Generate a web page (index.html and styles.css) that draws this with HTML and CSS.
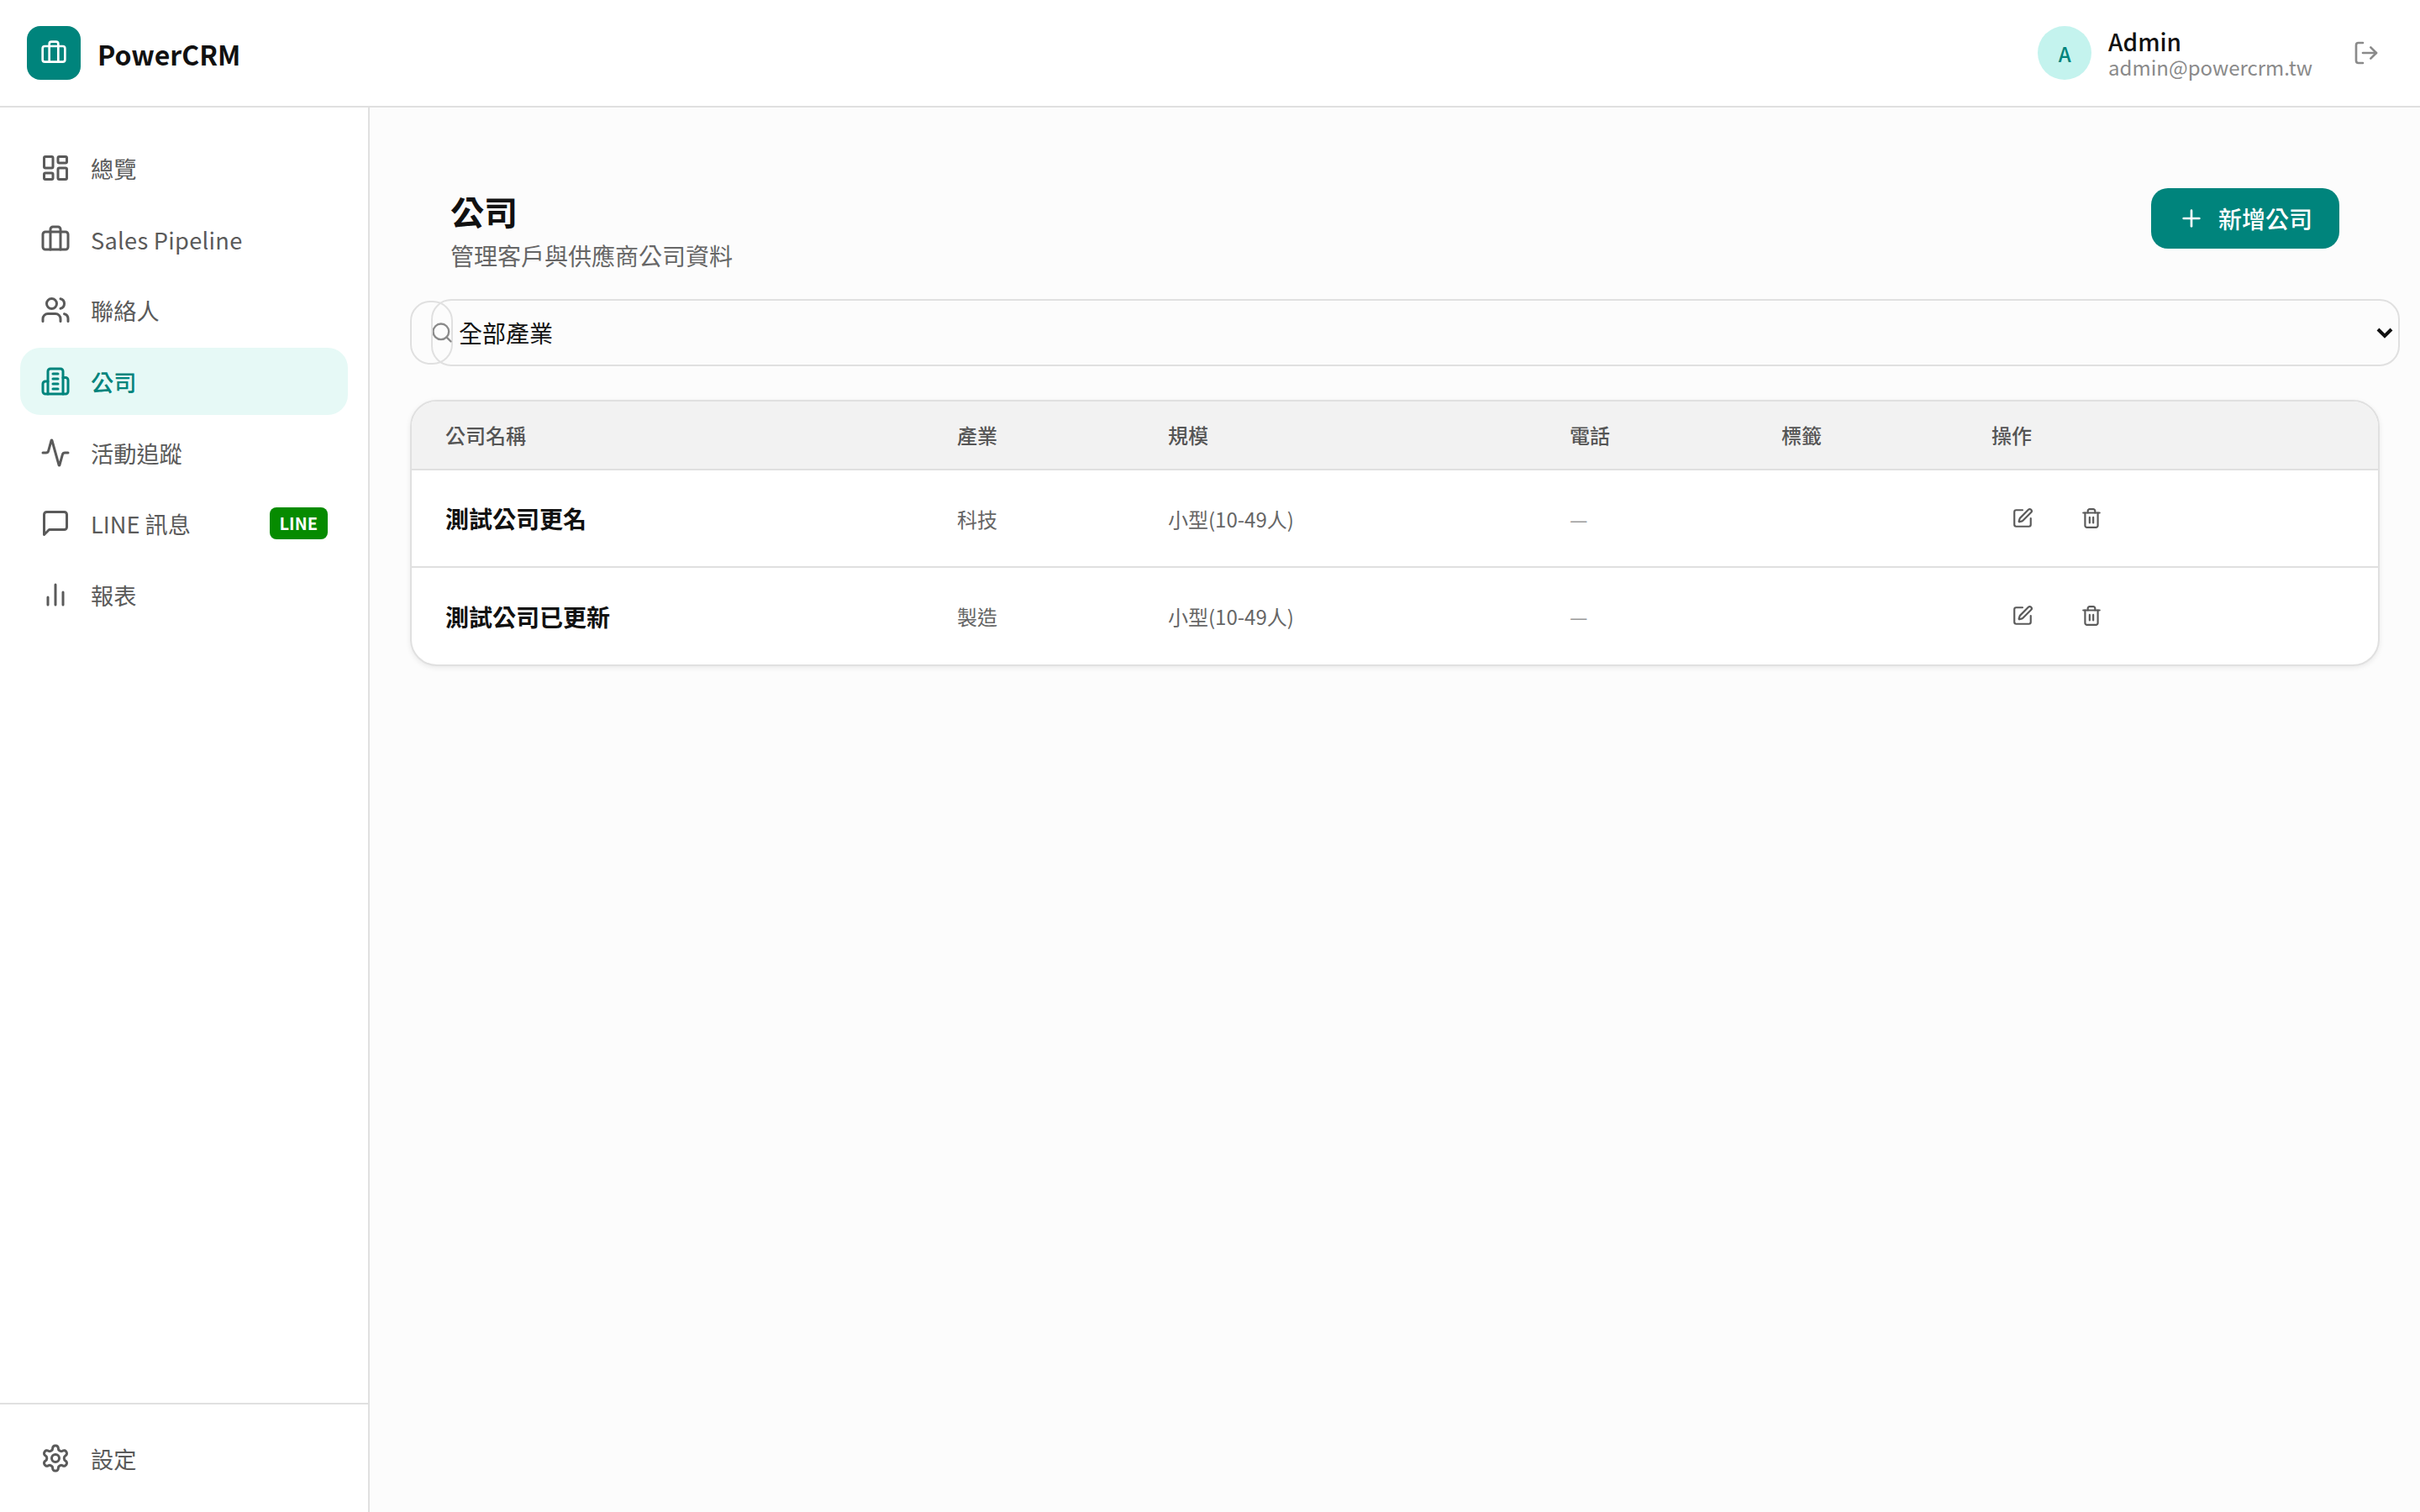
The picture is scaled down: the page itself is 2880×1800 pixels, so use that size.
FILE: index.html
```html
<!DOCTYPE html>
<html lang="zh-Hant">
<head>
<meta charset="utf-8">
<title>PowerCRM</title>
<link rel="stylesheet" href="styles.css">
</head>
<body>
<svg class="sprite" width="0" height="0" aria-hidden="true">
  <symbol id="i-dash" viewBox="0 0 24 24"><rect x="3" y="3" width="7" height="9" rx="1"/><rect x="14" y="3" width="7" height="5" rx="1"/><rect x="14" y="12" width="7" height="9" rx="1"/><rect x="3" y="16" width="7" height="5" rx="1"/></symbol>
  <symbol id="i-case" viewBox="0 0 24 24"><path d="M16 20V4a2 2 0 0 0-2-2h-4a2 2 0 0 0-2 2v16"/><rect x="2" y="6" width="20" height="14" rx="2"/></symbol>
  <symbol id="i-users" viewBox="0 0 24 24"><path d="M16 21v-2a4 4 0 0 0-4-4H6a4 4 0 0 0-4 4v2"/><circle cx="9" cy="7" r="4"/><path d="M22 21v-2a4 4 0 0 0-3-3.87"/><path d="M16 3.13a4 4 0 0 1 0 7.75"/></symbol>
  <symbol id="i-building" viewBox="0 0 24 24"><path d="M6 22V4a2 2 0 0 1 2-2h8a2 2 0 0 1 2 2v18Z"/><path d="M6 12H4a2 2 0 0 0-2 2v6a2 2 0 0 0 2 2h2"/><path d="M18 9h2a2 2 0 0 1 2 2v9a2 2 0 0 1-2 2h-2"/><path d="M10 6h4"/><path d="M10 10h4"/><path d="M10 14h4"/><path d="M10 18h4"/></symbol>
  <symbol id="i-activity" viewBox="0 0 24 24"><path d="M22 12h-2.48a2 2 0 0 0-1.93 1.46l-2.35 8.36a.25.25 0 0 1-.48 0L9.24 2.18a.25.25 0 0 0-.48 0l-2.35 8.36A2 2 0 0 1 4.49 12H2"/></symbol>
  <symbol id="i-msg" viewBox="0 0 24 24"><path d="M21 15a2 2 0 0 1-2 2H7l-4 4V5a2 2 0 0 1 2-2h14a2 2 0 0 1 2 2z"/></symbol>
  <symbol id="i-bars" viewBox="0 0 24 24"><path d="M18 20V10"/><path d="M12 20V4"/><path d="M6 20v-6"/></symbol>
  <symbol id="i-gear" viewBox="0 0 24 24"><path d="M12.22 2h-.44a2 2 0 0 0-2 2v.18a2 2 0 0 1-1 1.73l-.43.25a2 2 0 0 1-2 0l-.15-.08a2 2 0 0 0-2.73.73l-.22.38a2 2 0 0 0 .73 2.73l.15.1a2 2 0 0 1 1 1.72v.51a2 2 0 0 1-1 1.74l-.15.09a2 2 0 0 0-.73 2.73l.22.38a2 2 0 0 0 2.73.73l.15-.08a2 2 0 0 1 2 0l.43.25a2 2 0 0 1 1 1.73V20a2 2 0 0 0 2 2h.44a2 2 0 0 0 2-2v-.18a2 2 0 0 1 1-1.73l.43-.25a2 2 0 0 1 2 0l.15.08a2 2 0 0 0 2.73-.73l.22-.39a2 2 0 0 0-.73-2.73l-.15-.08a2 2 0 0 1-1-1.74v-.5a2 2 0 0 1 1-1.74l.15-.09a2 2 0 0 0 .73-2.73l-.22-.38a2 2 0 0 0-2.73-.73l-.15.08a2 2 0 0 1-2 0l-.43-.25a2 2 0 0 1-1-1.73V4a2 2 0 0 0-2-2z"/><circle cx="12" cy="12" r="3"/></symbol>
  <symbol id="i-logout" viewBox="0 0 24 24"><path d="M9 21H5a2 2 0 0 1-2-2V5a2 2 0 0 1 2-2h4"/><path d="M16 17l5-5-5-5"/><path d="M21 12H9"/></symbol>
  <symbol id="i-plus" viewBox="0 0 24 24"><path d="M5 12h14"/><path d="M12 5v14"/></symbol>
  <symbol id="i-search" viewBox="0 0 24 24"><circle cx="11" cy="11" r="8"/><path d="M21 21l-4.35-4.35"/></symbol>
  <symbol id="i-edit" viewBox="0 0 24 24"><path d="M12 3H5a2 2 0 0 0-2 2v14a2 2 0 0 0 2 2h14a2 2 0 0 0 2-2v-7"/><path d="M18.375 2.625a1 1 0 0 1 3 3l-9.013 9.014a2 2 0 0 1-.853.505l-2.873.84a.5.5 0 0 1-.62-.62l.84-2.873a2 2 0 0 1 .506-.852z"/></symbol>
  <symbol id="i-trash" viewBox="0 0 24 24"><path d="M3 6h18"/><path d="M19 6v14c0 1-1 2-2 2H7c-1 0-2-1-2-2V6"/><path d="M8 6V4c0-1 1-2 2-2h4c1 0 2 1 2 2v2"/><path d="M10 11v6"/><path d="M14 11v6"/></symbol>
</svg>

<header class="topbar">
  <div class="brand">
    <span class="brand-mark"><svg class="icon icon-brand"><use href="#i-case"/></svg></span>
    <span class="brand-name">PowerCRM</span>
  </div>
  <div class="account">
    <span class="avatar">A</span>
    <div class="account-text">
      <div class="account-name">Admin</div>
      <div class="account-mail">admin@powercrm.tw</div>
    </div>
    <button class="logout" type="button"><svg class="icon icon-logout"><use href="#i-logout"/></svg></button>
  </div>
</header>

<div class="shell">
  <aside class="sidebar">
    <nav class="nav">
      <a class="nav-item"><svg class="icon"><use href="#i-dash"/></svg><span>總覽</span></a>
      <a class="nav-item"><svg class="icon"><use href="#i-case"/></svg><span class="latin">Sales Pipeline</span></a>
      <a class="nav-item"><svg class="icon"><use href="#i-users"/></svg><span>聯絡人</span></a>
      <a class="nav-item is-active"><svg class="icon"><use href="#i-building"/></svg><span>公司</span></a>
      <a class="nav-item"><svg class="icon"><use href="#i-activity"/></svg><span>活動追蹤</span></a>
      <a class="nav-item"><svg class="icon"><use href="#i-msg"/></svg><span>LINE 訊息</span><em class="line-badge">LINE</em></a>
      <a class="nav-item"><svg class="icon"><use href="#i-bars"/></svg><span>報表</span></a>
    </nav>
    <div class="side-foot">
      <a class="nav-item"><svg class="icon"><use href="#i-gear"/></svg><span>設定</span></a>
    </div>
  </aside>

  <main class="main">
    <div class="page-head">
      <div>
        <h1 class="page-title">公司</h1>
        <p class="page-sub">管理客戶與供應商公司資料</p>
      </div>
      <button class="add-btn" type="button"><svg class="icon icon-plus"><use href="#i-plus"/></svg><span>新增公司</span></button>
    </div>

    <div class="filters">
      <div class="search-box"></div>
      <svg class="icon icon-search"><use href="#i-search"/></svg>
      <select class="industry"><option>全部產業</option></select>
      <svg class="select-arrow" viewBox="0 0 20 14"><path d="M2 3l8 8 8-8"/></svg>
    </div>

    <div class="table-card">
      <table class="table">
        <colgroup><col class="c1"><col class="c2"><col class="c3"><col class="c4"><col class="c5"><col class="c6"></colgroup>
        <thead>
          <tr><th>公司名稱</th><th>產業</th><th>規模</th><th>電話</th><th>標籤</th><th>操作</th></tr>
        </thead>
        <tbody>
          <tr>
            <td class="name">測試公司更名</td><td>科技</td><td>小型(10-49人)</td><td class="dash">—</td><td></td>
            <td><div class="actions"><button class="act" type="button"><svg class="icon icon-act"><use href="#i-edit"/></svg></button><button class="act" type="button"><svg class="icon icon-act"><use href="#i-trash"/></svg></button></div></td>
          </tr>
          <tr>
            <td class="name">測試公司已更新</td><td>製造</td><td>小型(10-49人)</td><td class="dash">—</td><td></td>
            <td><div class="actions"><button class="act" type="button"><svg class="icon icon-act"><use href="#i-edit"/></svg></button><button class="act" type="button"><svg class="icon icon-act"><use href="#i-trash"/></svg></button></div></td>
          </tr>
        </tbody>
      </table>
    </div>
  </main>
</div>
</body>
</html>
```
FILE: styles.css
```css
* { box-sizing: border-box; }
html, body { height: 100%; }
body {
  margin: 0;
  display: flex;
  flex-direction: column;
  height: 1800px;
  overflow: hidden;
  background: #fcfcfc;
  color: #111;
  font-family: "Noto Sans CJK TC", "Noto Sans", sans-serif;
}
.sprite { position: absolute; }
.icon {
  width: 36px;
  height: 36px;
  flex: none;
  fill: none;
  stroke: currentColor;
  stroke-width: 2;
  stroke-linecap: round;
  stroke-linejoin: round;
}

/* top bar */
.topbar {
  height: 128px;
  flex: none;
  display: flex;
  align-items: center;
  justify-content: space-between;
  padding: 0 32px;
  background: #fff;
  border-bottom: 2px solid #e0e0e0;
}
.brand { display: flex; align-items: center; gap: 20px; }
.brand-mark {
  width: 64px;
  height: 64px;
  border-radius: 16px;
  background: #00847c;
  color: #fff;
  display: flex;
  align-items: center;
  justify-content: center;
}
.icon-brand { width: 32px; height: 32px; }
.brand-name { font-size: 32px; font-weight: 600; line-height: 1.3; padding-top: 3px; }
.account { display: flex; align-items: center; }
.avatar {
  width: 64px;
  height: 64px;
  border-radius: 50%;
  background: #c4f3ee;
  color: #00847c;
  display: flex;
  align-items: center;
  justify-content: center;
  font-size: 24px;
  font-weight: 500;
  margin-right: 20px;
}
.account-text { display: flex; flex-direction: column; margin-right: 32px; }
.account-name { font-size: 28px; font-weight: 500; line-height: 30px; padding-top: 2px; }
.account-mail { font-size: 24px; color: #8a8a8a; line-height: 28px; margin-top: 2px; }
.logout {
  border: 0;
  background: none;
  padding: 16px;
  width: 64px;
  height: 64px;
  color: #8a8a8a;
  display: flex;
  align-items: center;
  justify-content: center;
}
.icon-logout { width: 32px; height: 32px; }

/* layout */
.shell { flex: 1; display: flex; min-height: 0; }
.sidebar {
  width: 440px;
  flex: none;
  display: flex;
  flex-direction: column;
  background: #fff;
  border-right: 2px solid #e0e0e0;
}
.nav {
  flex: 1;
  display: flex;
  flex-direction: column;
  gap: 4.67px;
  padding: 32px 24px;
}
.nav-item {
  height: 80px;
  display: flex;
  align-items: center;
  gap: 24px;
  padding: 0 24px;
  border-radius: 24px;
  color: #5a5a5a;
  font-size: 27.2px;
}
.nav-item .latin { letter-spacing: .28px; }
.nav-item.is-active { background: #e6f9f6; color: #00847c; font-weight: 500; }
.line-badge {
  margin-left: auto;
  padding: 0 12px;
  height: 38px;
  border-radius: 8px;
  background: #068b00;
  color: #fff;
  font-style: normal;
  font-size: 20px;
  font-weight: 700;
  line-height: 38px;
}
.side-foot {
  height: 130px;
  flex: none;
  border-top: 2px solid #e0e0e0;
  padding: 24px 24px 0;
}

/* main */
.main { flex: 1; min-width: 0; padding: 48px; display: flex; flex-direction: column; }
.page-head {
  display: flex;
  justify-content: space-between;
  align-items: flex-start;
  padding: 0 48px;
  height: 180px;
}
.page-title { margin: 0; padding-top: 51px; font-size: 40px; font-weight: 700; line-height: 48px; }
.page-sub { margin: 8px 0 0; font-size: 28px; color: #666; line-height: 42px; }
.add-btn {
  margin-top: 48px;
  width: 224px;
  height: 72px;
  border: 0;
  border-radius: 20px;
  background: #00847c;
  color: #fff;
  display: flex;
  align-items: center;
  justify-content: center;
  gap: 16px;
  font: inherit;
  font-size: 28px;
  font-weight: 500;
}
.icon-plus { width: 32px; height: 32px; }
.filters { position: relative; height: 80px; margin-bottom: 40px; }
.search-box {
  position: absolute;
  left: 0;
  top: 2px;
  width: 51px;
  height: 76px;
  border: 2px solid #e0e0e0;
  border-radius: 24px;
}
.icon-search { position: absolute; left: 24px; top: 26px; width: 28px; height: 28px; color: #8a8a8a; }
.industry {
  position: absolute;
  left: 25px;
  top: 0;
  width: 2343px;
  height: 80px;
  padding-left: 31px;
  appearance: none;
  border: 2px solid #e0e0e0;
  border-radius: 24px;
  background: transparent;
  color: #111;
  font: inherit;
  font-size: 28px;
}
.select-arrow {
  position: absolute;
  left: 2340px;
  top: 33px;
  width: 20px;
  height: 14px;
  fill: none;
  stroke: #111;
  stroke-width: 4;
}
.table-card {
  width: 2344px;
  border: 2px solid #e0e0e0;
  border-radius: 32px;
  overflow: hidden;
  background: #fff;
  box-shadow: 0 2px 6px rgba(0,0,0,.08);
}
.table { width: 100%; border-collapse: collapse; table-layout: fixed; }
.c1 { width: 608px; } .c2 { width: 251px; } .c3 { width: 478px; } .c4 { width: 252px; } .c5 { width: 250px; }
.table th {
  height: 81px;
  padding: 0 0 2px 41px;
  background: #f2f2f2;
  border-bottom: 2px solid #e0e0e0;
  text-align: left;
  font-size: 24px;
  font-weight: 500;
  color: #555;
}
.table td {
  height: 116px;
  padding: 0 0 0 41px;
  border-top: 2px solid #e0e0e0;
  font-size: 24px;
  color: #666;
}
.table tbody tr:first-child td { border-top: 0; }
.table td.name { font-size: 28px; font-weight: 600; color: #111; }
.table td.dash { color: #999; }
.table th:first-child, .table td:first-child { padding-left: 40px; }
.actions { display: flex; gap: 10px; margin-top: -1px; margin-left: 1px; }
.act {
  width: 72px;
  height: 60px;
  padding: 0;
  border: 0;
  background: none;
  color: #5a5a5a;
  display: flex;
  align-items: center;
  justify-content: center;
}
.icon-act { width: 26px; height: 26px; }
```
